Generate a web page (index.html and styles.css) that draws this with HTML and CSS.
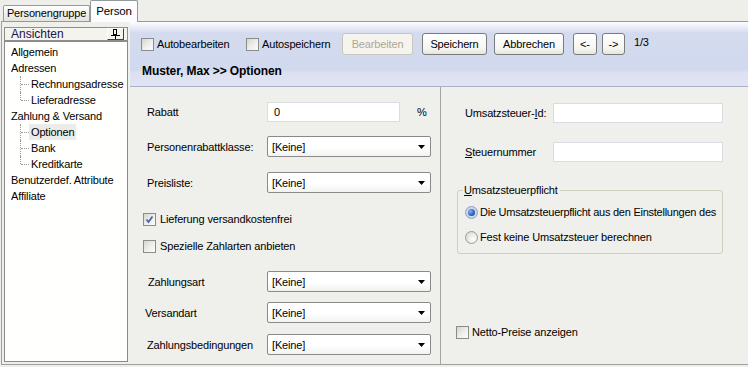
FILE: index.html
```html
<!DOCTYPE html>
<html lang="de">
<head>
<meta charset="utf-8">
<title>Person - Optionen</title>
<link rel="stylesheet" href="styles.css">
</head>
<body>
<div class="tabs">
  <div class="tab">Personengruppe</div>
  <div class="tab active">Person</div>
</div>
<div class="panel">
  <aside class="sidebar">
    <div class="side-head">
      <span class="side-title">Ansichten</span>
      <span class="pin"><svg width="9" height="10" viewBox="0 0 9 10"><rect x="2.5" y="0.5" width="3" height="5" fill="none" stroke="#000"/><line x1="0" y1="6.5" x2="9" y2="6.5" stroke="#000"/><line x1="4.5" y1="7" x2="4.5" y2="10" stroke="#000"/></svg></span>
    </div>
    <ul class="tree">
      <li><div class="node">Allgemein</div></li>
      <li><div class="node">Adressen</div>
        <ul class="children">
          <li class="child">Rechnungsadresse</li>
          <li class="child">Lieferadresse</li>
        </ul>
      </li>
      <li><div class="node">Zahlung &amp; Versand</div>
        <ul class="children">
          <li class="child"><span class="sel">Optionen</span></li>
          <li class="child">Bank</li>
          <li class="child">Kreditkarte</li>
        </ul>
      </li>
      <li><div class="node">Benutzerdef. Attribute</div></li>
      <li><div class="node">Affiliate</div></li>
    </ul>
  </aside>
  <main class="main">
    <div class="toolbar">
      <div class="tb-row">
        <label class="tb-check w1"><span class="cb"></span><span class="cb-text">Autobearbeiten</span></label>
        <label class="tb-check w2"><span class="cb"></span><span class="cb-text">Autospeichern</span></label>
        <button class="btn disabled b-edit" type="button">Bearbeiten</button>
        <button class="btn b-save" type="button">Speichern</button>
        <button class="btn b-cancel" type="button">Abbrechen</button>
        <button class="btn b-prev" type="button">&lt;-</button>
        <button class="btn b-next" type="button">-&gt;</button>
        <span class="pager">1/3</span>
      </div>
      <div class="tb-title">Muster, Max &gt;&gt; Optionen</div>
    </div>
    <div class="content">
      <div class="col-left">
        <div class="frow r1">
          <span class="flabel">Rabatt</span>
          <span class="tinput w-rabatt">0</span>
          <span class="unit">%</span>
        </div>
        <div class="frow r2">
          <span class="flabel">Personenrabattklasse:</span>
          <span class="select"><span>[Keine]</span><svg width="7" height="4" viewBox="0 0 7 4"><path d="M0 0H7L3.5 4Z" fill="#000"/></svg></span>
        </div>
        <div class="frow r3">
          <span class="flabel">Preisliste:</span>
          <span class="select"><span>[Keine]</span><svg width="7" height="4" viewBox="0 0 7 4"><path d="M0 0H7L3.5 4Z" fill="#000"/></svg></span>
        </div>
        <div class="crow r4">
          <span class="cb checked"><svg width="11" height="11" viewBox="0 0 11 11"><path d="M2.5 5.5L4.5 8L8.5 2.5" fill="none" stroke="#4a66a8" stroke-width="1.8"/></svg></span>
          <span class="cb-text">Lieferung versandkostenfrei</span>
        </div>
        <div class="crow r5">
          <span class="cb"></span>
          <span class="cb-text">Spezielle Zahlarten anbieten</span>
        </div>
        <div class="frow r6">
          <span class="flabel l-zart">Zahlungsart</span>
          <span class="select"><span>[Keine]</span><svg width="7" height="4" viewBox="0 0 7 4"><path d="M0 0H7L3.5 4Z" fill="#000"/></svg></span>
        </div>
        <div class="frow r7">
          <span class="flabel l-vart">Versandart</span>
          <span class="select"><span>[Keine]</span><svg width="7" height="4" viewBox="0 0 7 4"><path d="M0 0H7L3.5 4Z" fill="#000"/></svg></span>
        </div>
        <div class="frow r8">
          <span class="flabel">Zahlungsbedingungen</span>
          <span class="select"><span>[Keine]</span><svg width="7" height="4" viewBox="0 0 7 4"><path d="M0 0H7L3.5 4Z" fill="#000"/></svg></span>
        </div>
      </div>
      <div class="col-right">
        <div class="rrow q1">
          <span class="rlabel">Umsatzsteuer-<u>I</u>d:</span>
          <span class="tinput w-right"></span>
        </div>
        <div class="rrow q2">
          <span class="rlabel"><u>S</u>teuernummer</span>
          <span class="tinput w-right"></span>
        </div>
        <fieldset class="group">
          <legend><u>U</u>msatzsteuerpflicht</legend>
          <div class="radio-row">
            <span class="rb on"><span class="dot"></span></span>
            <span class="rb-text tight">Die Umsatzsteuerpflicht aus den Einstellungen des</span>
          </div>
          <div class="radio-row second">
            <span class="rb"></span>
            <span class="rb-text">Fest keine Umsatzsteuer berechnen</span>
          </div>
        </fieldset>
        <div class="crow netto">
          <span class="cb"></span>
          <span class="cb-text">Netto-Preise anzeigen</span>
        </div>
      </div>
    </div>
  </main>
</div>
</body>
</html>
```

FILE: styles.css
```css
* { box-sizing: border-box; }

html, body {
  margin: 0;
  padding: 0;
}

body {
  width: 748px;
  height: 367px;
  overflow: hidden;
  background: #eeeeea;
  font-family: "Liberation Sans", Arial, sans-serif;
  font-size: 11px;
  letter-spacing: -0.15px;
  color: #000;
}

/* Tabs */
.tabs {
  position: relative;
  z-index: 1;
  display: flex;
  align-items: flex-end;
  height: 21px;
  padding-left: 3px;
}

.tab {
  width: 87px;
  height: 16px;
  border: 1px solid #919b9c;
  border-bottom: none;
  border-radius: 2px 2px 0 0;
  background: linear-gradient(#fefefd, #efeee9 60%, #e4e3dc);
  text-align: center;
  line-height: 15px;
  font-size: 11px;
}

.tab.active {
  width: 48px;
  height: 22px;
  margin-bottom: -1px;
  background: #fcfcfe;
  line-height: 21px;
  font-size: 11.5px;
}

/* Panel */
.panel {
  display: flex;
  width: 770px;
  height: 344px;
  margin-left: 1px;
  border-top: 1px solid #919b9c;
  border-left: 1px solid #a0a0a0;
  border-bottom: 1px solid #a0a0a0;
  background: #efefeb;
}

.sidebar {
  width: 126px;
  flex: none;
  padding: 5px 0 0 2px;
}

.side-head {
  display: flex;
  align-items: center;
  justify-content: space-between;
  height: 14px;
  border: 1px solid #8e8e8e;
  background: #f4f3ee;
  padding-left: 6px;
  padding-right: 3px;
}

.side-title {
  font-size: 12px;
  letter-spacing: 0;
  color: #14144a;
  line-height: 12px;
}

.pin {
  display: flex;
  align-items: center;
  justify-content: center;
  width: 17px;
  height: 12px;
  border: 1px solid;
  border-color: #ffffff #404040 #404040 #ffffff;
}

.tree {
  list-style: none;
  margin: 0;
  padding: 2px 0 0 0;
  height: 321px;
  border: 1px solid #8a8a8a;
  background: #fffffd;
  font-size: 11px;
}

.tree li { line-height: 16px; }

.node { padding-left: 6px; }

.children {
  list-style: none;
  margin: 0;
  padding: 0;
}

.child {
  position: relative;
  padding-left: 26px;
}

.child::before {
  content: "";
  position: absolute;
  left: 15px;
  top: 0;
  bottom: 0;
  border-left: 1px dotted #9a9a9a;
}

.child:last-child::before { bottom: 8px; }

.child::after {
  content: "";
  position: absolute;
  left: 16px;
  top: 8px;
  width: 8px;
  border-top: 1px dotted #9a9a9a;
}

.sel {
  display: inline-block;
  margin-left: -2px;
  padding: 0 2px;
  background: #ebebe9;
}

/* Main */
.main {
  flex: none;
  width: 640px;
  margin-left: 2px;
  display: flex;
  flex-direction: column;
}

.toolbar {
  height: 65px;
  border-bottom: 1px solid #a8b0c6;
  background: linear-gradient(#fdfdff 0px, #d4dbef 11px, #d1d9ee 48px, #dce0f0 50px, #e1e4f2 64px);
}

.tb-row {
  display: flex;
  align-items: center;
  height: 22px;
  margin: 11px 0 0 11px;
}

.tb-check {
  display: flex;
  align-items: center;
  flex: none;
}

.tb-check.w1 { width: 105px; }
.tb-check.w2 { width: 96px; }

.cb {
  display: flex;
  align-items: center;
  justify-content: center;
  width: 13px;
  height: 13px;
  flex: none;
  border: 1px solid #8c8c8c;
  background: linear-gradient(135deg, #d6d6d0, #efefeb 55%, #fcfcfb);
}

.cb-text { margin-left: 3px; white-space: nowrap; }

.btn {
  flex: none;
  height: 22px;
  padding: 0;
  border: 1px solid #7b7b7b;
  border-radius: 3px;
  background: linear-gradient(#ffffff, #f6f6f3 70%, #e6e5de);
  font-family: "Liberation Sans", Arial, sans-serif;
  font-size: 11px;
  letter-spacing: -0.15px;
  color: #000;
  text-align: center;
}

.btn.disabled {
  border-color: #c9c7bd;
  background: #f5f4ee;
  color: #aca899;
}

.b-edit { width: 71px; }
.b-save { width: 65px; margin-left: 9px; }
.b-cancel { width: 70px; margin-left: 7px; }
.b-prev { width: 24px; margin-left: 9px; }
.b-next { width: 23px; margin-left: 5px; }

.pager {
  align-self: flex-start;
  margin-top: 2px;
  margin-left: 9px;
  line-height: 14px;
}

.tb-title {
  margin: 9px 0 0 12px;
  line-height: 14px;
  font-size: 12px;
  font-weight: bold;
  letter-spacing: -0.1px;
}

/* Content */
.content {
  display: flex;
  flex: 1;
}

.col-left {
  width: 311px;
  flex: none;
  border-right: 1px solid #a4a4a4;
  padding: 14px 0 0 17px;
}

.frow {
  display: flex;
  align-items: center;
  height: 21px;
}

.flabel {
  width: 120px;
  flex: none;
  white-space: nowrap;
}

.l-zart { padding-left: 1px; }
.l-vart { margin-left: -2px; width: 122px; }

.r2 { margin-top: 14px; }
.r3 { margin-top: 15px; }
.r4 { margin-top: 18px; }
.r5 { margin-top: 11px; }
.r6 { margin-top: 17px; }
.r7 { margin-top: 10px; }
.r8 { margin-top: 11px; }

.crow {
  display: flex;
  align-items: center;
  height: 16px;
}

.col-left .crow { margin-left: -4px; }
.col-left .crow .cb-text { margin-left: 4px; }

.tinput {
  display: flex;
  align-items: center;
  height: 20px;
  border: 1px solid #d9dce1;
  background: #ffffff;
  padding-left: 6px;
}

.w-rabatt { width: 133px; }

.unit { margin-left: 17px; }

.select {
  display: flex;
  align-items: center;
  justify-content: space-between;
  width: 164px;
  height: 21px;
  border: 1px solid #8a8a8a;
  border-radius: 2px;
  background: linear-gradient(#ffffff, #ffffff 55%, #f2f2f0);
  padding: 0 5px 0 4px;
}

.col-right {
  flex: none;
  width: 320px;
  padding: 16px 0 0 16px;
}

.rrow {
  display: flex;
  align-items: center;
  height: 20px;
}

.q2 { margin-top: 19px; }

.rlabel {
  width: 88px;
  margin-left: 8px;
  flex: none;
  white-space: nowrap;
}

.w-right { width: 170px; }

.group {
  width: 266px;
  min-width: 0;
  margin: 22px 0 0 0;
  padding: 7px 2px 8px 7px;
  border: 1px solid #d0d0bf;
  border-radius: 3px;
}

.group legend {
  margin-left: -2px;
  padding: 0 2px 0 1px;
  line-height: 13px;
}

.radio-row {
  display: flex;
  align-items: center;
  height: 16px;
  overflow: hidden;
  white-space: nowrap;
}

.radio-row.second { margin-top: 9px; }

.rb {
  display: flex;
  align-items: center;
  justify-content: center;
  width: 13px;
  height: 13px;
  flex: none;
  border-radius: 50%;
  border: 1px solid #9b9b9b;
  background: radial-gradient(circle at 65% 65%, #ffffff, #e4e4df 60%, #cfcfc9);
}

.rb.on { border-color: #8ea1c4; background: radial-gradient(circle, #dce6f6, #c0cde6); }

.dot {
  width: 7px;
  height: 7px;
  border-radius: 50%;
  background: radial-gradient(circle at 35% 35%, #8fb2ec, #2a5cbc 60%, #173f8e);
}

.rb-text { margin-left: 2px; }
.rb-text.tight { letter-spacing: -0.25px; }

.netto { margin-top: 70px; margin-left: -1px; }
```
